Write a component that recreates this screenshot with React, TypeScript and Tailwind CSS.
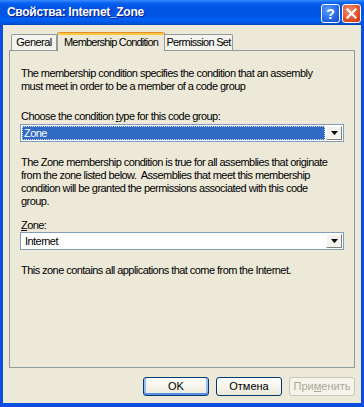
import type { ReactNode } from 'react'

const FONT = "font-['Liberation_Sans','Arial',sans-serif]"

function Arrow() {
  return (
    <svg width="7" height="4" viewBox="0 0 7 4" className="block">
      <path d="M0 0H7L3.5 4Z" fill="#000" />
    </svg>
  )
}

function Combo({ value, selected }: { value: string; selected?: boolean }) {
  return (
    <div className="h-[18px] flex items-stretch border border-[#7f9db9] bg-white">
      <div className="flex-1 flex items-center p-px">
        {selected ? (
          <div className="h-full w-full bg-[#316ac5] text-white pl-[2px] flex items-center outline-1 outline-dotted outline-[#cfd8e8] -outline-offset-1">
            {value}
          </div>
        ) : (
          <div className="pl-[3px]">{value}</div>
        )}
      </div>
      <div className="w-[16px] my-px mr-px flex flex-col items-center justify-center bg-[#f4f3ee] border-r border-b border-[#808080] border-l border-l-white border-t border-t-white">
        <Arrow />
      </div>
    </div>
  )
}

function Btn({ children, primary, disabled }: { children: ReactNode; primary?: boolean; disabled?: boolean }) {
  return (
    <button
      className={
        'w-[66px] h-[19px] rounded-[3px] border flex items-center justify-center text-[11px] ' +
        (disabled
          ? 'border-[#c9c7ba] text-[#aca899] bg-[#f5f4ea]'
          : 'border-[#003c74] text-black bg-gradient-to-b from-white to-[#ece9d8]') +
        (primary ? ' shadow-[inset_0_-2px_0_#5a8fe8,inset_2px_0_0_#9cc0f5,inset_-2px_0_0_#9cc0f5]' : '')
      }
    >
      {children}
    </button>
  )
}

export default function App() {
  return (
    <div className={`w-[364px] h-[407px] flex flex-col bg-[#0b4fe2] ${FONT} text-[11px] leading-[13px] tracking-[-0.55px] text-black overflow-hidden`}>
      {/* title bar */}
      <div className="h-[25px] shrink-0 flex items-center pl-[7px] pr-[3px] bg-[linear-gradient(180deg,#3a8cff_0%,#0a62f2_12%,#0055e5_30%,#0054e3_60%,#0060f5_80%,#0052d6_95%,#0044b8_100%)]">
        <div className="flex-1 text-white font-bold text-[12px] [text-shadow:1px_1px_0_#0a1883] tracking-[-0.3px]">
          Свойства: Internet_Zone
        </div>
        <div className="flex gap-[2px] self-start mt-[4px] tracking-normal">
          <div className="w-[19px] h-[19px] rounded-[3px] border border-white bg-[radial-gradient(circle_at_35%_30%,#5b9bff,#1f5fe0_70%,#1248c6)] flex items-center justify-center text-white font-bold text-[14px] leading-none">
            ?
          </div>
          <div className="w-[19px] h-[19px] rounded-[3px] border border-white bg-[radial-gradient(circle_at_35%_30%,#f38b6a,#dd4a22_70%,#c23a15)] flex items-center justify-center">
            <svg width="11" height="11" viewBox="0 0 11 11">
              <path d="M1.5 1.5L9.5 9.5M9.5 1.5L1.5 9.5" stroke="#fff" strokeWidth="2.2" strokeLinecap="square" />
            </svg>
          </div>
        </div>
      </div>

      {/* body */}
      <div className="flex-1 mx-[3px] mb-[4px] bg-[#ece9d8] flex flex-col pt-[7px] px-[6px]">
        {/* tabs */}
        <div className="h-[18px] flex items-end pl-[2px] relative z-10 whitespace-nowrap">
          <div className="w-[46px] h-[16px] border border-b-0 border-[#919b9c] rounded-t-[2px] flex items-center justify-center bg-[#f4f3ee]">
            General
          </div>
          <div className="w-[108px] h-[19px] -mb-px border-x border-[#919b9c] rounded-t-[2px] flex flex-col bg-[#ece9d8]">
            <div className="h-[3px] rounded-t-[2px] bg-[linear-gradient(180deg,#e68b2c_0%,#e68b2c_33%,#ffc73c_34%,#ffc73c_100%)]" />
            <div className="flex-1 flex items-center justify-center pb-[1px] tracking-[-0.8px]">Membership Condition</div>
          </div>
          <div className="w-[68px] h-[16px] border border-b-0 border-l-0 border-[#919b9c] rounded-tr-[2px] flex items-center justify-center bg-[#f4f3ee] tracking-[-0.7px]">
            Permission Set
          </div>
        </div>

        {/* panel */}
        <div className="h-[318px] border border-[#919b9c] px-[10px] flex flex-col">
          <p className="mt-[16px] pl-px pr-[20px]">
            The membership condition specifies the condition that an assembly must meet in order to be a member of a code group
          </p>
          <p className="mt-[17px] pl-px">
            Choose the condition <span className="underline">t</span>ype for this code group:
          </p>
          <div className="mt-[1px]">
            <Combo value="Zone" selected />
          </div>
          <p className="mt-[14px] pl-px pr-[8px]">
            The Zone membership condition is true for all assemblies that originate from the zone listed below.&nbsp; Assemblies that meet this membership condition will be granted the permissions associated with this code group.
          </p>
          <p className="mt-[11px] pl-px">
            <span className="underline">Z</span>one:
          </p>
          <div>
            <Combo value="Internet" />
          </div>
          <p className="mt-[14px] pl-px">This zone contains all applications that come from the Internet.</p>
        </div>

        {/* buttons */}
        <div className="mt-[9px] flex justify-end gap-[7px] tracking-normal">
          <Btn primary>OK</Btn>
          <Btn>Отмена</Btn>
          <Btn disabled>
            При<span className="underline">м</span>енить
          </Btn>
        </div>
      </div>
    </div>
  )
}
